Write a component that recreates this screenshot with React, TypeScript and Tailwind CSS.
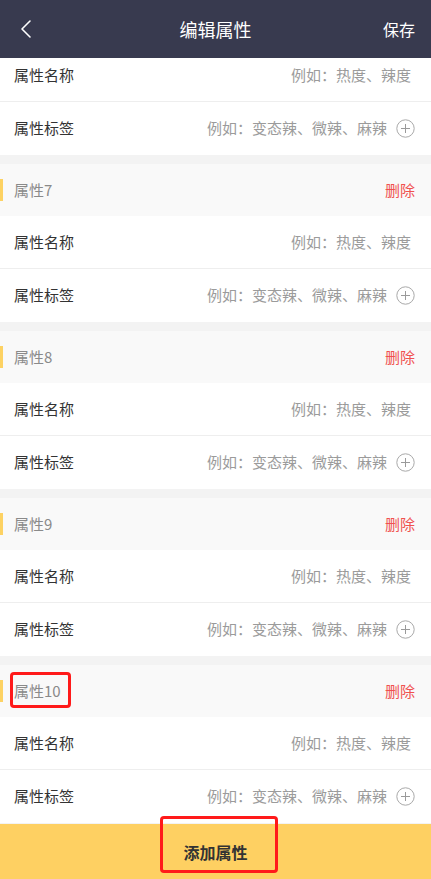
import React from "react";

const font = { fontFamily: '"Noto Sans CJK SC", "Noto Sans", sans-serif' };

function PlusCircle() {
  return (
    <svg width="19" height="19" viewBox="0 0 19 19" className="shrink-0">
      <circle cx="9.5" cy="9.5" r="8.7" fill="none" stroke="#a8a8a8" strokeWidth="1" />
      <path d="M9.5 5v9M5 9.5h9" stroke="#9a9a9a" strokeWidth="1" />
    </svg>
  );
}

function NameRow() {
  return (
    <div className="flex h-[53px] items-center justify-between border-b border-[#eeeeee] bg-white pl-[14px] pr-[20px]">
      <span className="text-[15px] text-[#333333]">属性名称</span>
      <span className="text-[15px] text-[#9b9b9b]">例如：热度、辣度</span>
    </div>
  );
}

function TagRow() {
  return (
    <div className="flex h-[53px] items-center justify-between bg-white pl-[14px] pr-[16px]">
      <span className="text-[15px] text-[#333333]">属性标签</span>
      <div className="flex items-center gap-[9px]">
        <span className="text-[15px] text-[#9b9b9b]">例如：变态辣、微辣、麻辣</span>
        <PlusCircle />
      </div>
    </div>
  );
}

function Group({ n, last }: { n: number; last?: boolean }) {
  return (
    <div className={last ? "" : "mb-[9px]"}>
      <div className="relative flex h-[52px] items-center justify-between bg-[#f9f9f9] pl-[14px] pr-[16px]">
        <div className="absolute left-0 top-[15px] h-[22px] w-[3px] bg-[#fdd263]" />
        <span className="text-[15px] text-[#8a8a8a]">属性{n}</span>
        <span className="text-[15px] text-[#f0524f]">删除</span>
      </div>
      <NameRow />
      <TagRow />
    </div>
  );
}

export default function App() {
  return (
    <div className="relative flex h-[879px] w-[431px] flex-col overflow-hidden bg-[#f3f3f3]" style={font}>
      <div className="relative z-10 flex h-[58px] shrink-0 items-center justify-between bg-[#383a4f] px-[16px]">
        <svg width="20" height="22" viewBox="0 0 20 22">
          <path d="M14 3L6 11l8 8" fill="none" stroke="#ffffff" strokeWidth="1.6" strokeLinecap="round" strokeLinejoin="round" />
        </svg>
        <span className="absolute left-1/2 -translate-x-1/2 text-[18px] text-white">编辑属性</span>
        <span className="text-[16px] text-white">保存</span>
      </div>
      <div className="flex-1 overflow-hidden">
        <div className="-mt-[9px]">
          <div className="mb-[9px]">
            <NameRow />
            <TagRow />
          </div>
          <Group n={7} />
          <Group n={8} />
          <Group n={9} />
          <Group n={10} last />
        </div>
      </div>
      <div className="flex h-[55px] shrink-0 items-center justify-center bg-[#fed062]">
        <span className="text-[16px] font-bold text-[#333333]">添加属性</span>
      </div>
      <div className="pointer-events-none absolute left-[10px] top-[672px] h-[36px] w-[61px] rounded-[4px] border-[3px] border-[#ff1a1a]" />
      <div className="pointer-events-none absolute left-[160px] top-[816px] h-[57px] w-[118px] rounded-[4px] border-[3px] border-[#ff1a1a]" />
    </div>
  );
}
